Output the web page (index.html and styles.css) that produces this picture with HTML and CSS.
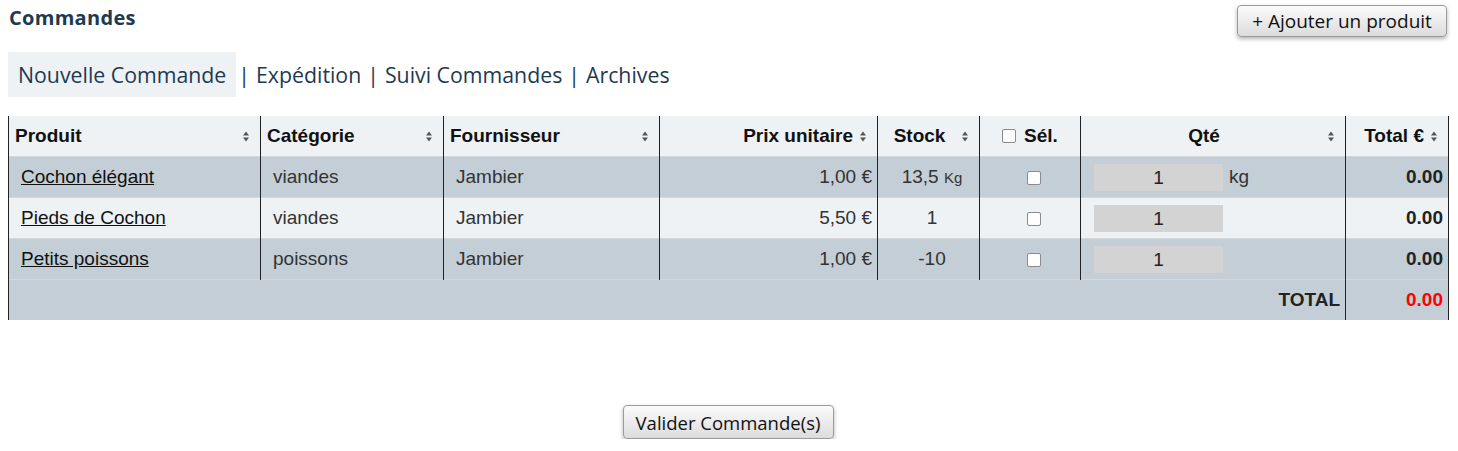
FILE: index.html
```html
<!DOCTYPE html>
<html lang="fr">
<head>
<meta charset="utf-8">
<title>Commandes</title>
<link rel="stylesheet" href="styles.css">
</head>
<body>
<div class="page">
  <div class="topbar">
    <h1 class="title">Commandes</h1>
    <button class="btn btn-add" type="button">+ Ajouter un produit</button>
  </div>

  <nav class="tabs">
    <a class="tab active" href="#">Nouvelle Commande</a>
    <span class="sep sep-first">|</span>
    <a class="tab" href="#">Expédition</a>
    <span class="sep">|</span>
    <a class="tab" href="#">Suivi Commandes</a>
    <span class="sep">|</span>
    <a class="tab" href="#">Archives</a>
  </nav>

  <table class="grid">
    <colgroup>
      <col class="w-prod">
      <col class="w-cat">
      <col class="w-four">
      <col class="w-prix">
      <col class="w-stock">
      <col class="w-sel">
      <col class="w-qte">
      <col class="w-total">
    </colgroup>
    <thead>
      <tr>
        <th class="sortable left">Produit<span class="sort"><svg viewBox="0 0 8 11" width="8" height="11"><path d="M4 0.5L7 4.4H1Z"/><path d="M1 6.6H7L4 10.5Z"/></svg></span></th>
        <th class="sortable left">Catégorie<span class="sort"><svg viewBox="0 0 8 11" width="8" height="11"><path d="M4 0.5L7 4.4H1Z"/><path d="M1 6.6H7L4 10.5Z"/></svg></span></th>
        <th class="sortable left">Fournisseur<span class="sort"><svg viewBox="0 0 8 11" width="8" height="11"><path d="M4 0.5L7 4.4H1Z"/><path d="M1 6.6H7L4 10.5Z"/></svg></span></th>
        <th class="sortable right">Prix unitaire<span class="sort"><svg viewBox="0 0 8 11" width="8" height="11"><path d="M4 0.5L7 4.4H1Z"/><path d="M1 6.6H7L4 10.5Z"/></svg></span></th>
        <th class="sortable center">Stock<span class="sort"><svg viewBox="0 0 8 11" width="8" height="11"><path d="M4 0.5L7 4.4H1Z"/><path d="M1 6.6H7L4 10.5Z"/></svg></span></th>
        <th class="center sel-head"><span class="sel-wrap"><span class="cb"></span>Sél.</span></th>
        <th class="sortable center">Qté<span class="sort"><svg viewBox="0 0 8 11" width="8" height="11"><path d="M4 0.5L7 4.4H1Z"/><path d="M1 6.6H7L4 10.5Z"/></svg></span></th>
        <th class="sortable right">Total €<span class="sort"><svg viewBox="0 0 8 11" width="8" height="11"><path d="M4 0.5L7 4.4H1Z"/><path d="M1 6.6H7L4 10.5Z"/></svg></span></th>
      </tr>
    </thead>
    <tbody>
      <tr class="odd">
        <td><a class="prod" href="#">Cochon élégant</a></td>
        <td>viandes</td>
        <td>Jambier</td>
        <td class="right">1,00 €</td>
        <td class="center">13,5 <span class="unit">Kg</span></td>
        <td class="center"><span class="cb"></span></td>
        <td><span class="qty">1</span><span class="qty-unit">kg</span></td>
        <td class="right strong">0.00</td>
      </tr>
      <tr class="even">
        <td><a class="prod" href="#">Pieds de Cochon</a></td>
        <td>viandes</td>
        <td>Jambier</td>
        <td class="right">5,50 €</td>
        <td class="center">1</td>
        <td class="center"><span class="cb"></span></td>
        <td><span class="qty">1</span></td>
        <td class="right strong">0.00</td>
      </tr>
      <tr class="odd">
        <td><a class="prod" href="#">Petits poissons</a></td>
        <td>poissons</td>
        <td>Jambier</td>
        <td class="right">1,00 €</td>
        <td class="center">-10</td>
        <td class="center"><span class="cb"></span></td>
        <td><span class="qty">1</span></td>
        <td class="right strong">0.00</td>
      </tr>
      <tr class="odd total-row">
        <td colspan="7" class="right strong">TOTAL</td>
        <td class="right strong red">0.00</td>
      </tr>
    </tbody>
  </table>

  <div class="actions">
    <button class="btn btn-validate" type="button">Valider Commande(s)</button>
  </div>
</div>
</body>
</html>
```

FILE: styles.css
```css
html, body {
  margin: 0;
  padding: 0;
  background: #ffffff;
}

.page {
  padding: 0 10px 0 8px;
  font-family: "Open Sans", "Noto Sans", sans-serif;
  color: #1d3a52;
}

.topbar {
  display: flex;
  justify-content: space-between;
  align-items: flex-start;
  padding-top: 5px;
}

.title {
  margin: 0 0 0 1px;
  font-size: 20px;
  font-weight: 700;
  line-height: 26px;
  letter-spacing: 0.3px;
  color: #1d3a52;
}

.btn {
  font-family: "Open Sans", "Noto Sans", sans-serif;
  color: #111;
  background: linear-gradient(#fbfbfb, #dcdcdc);
  border: 1px solid #9a9a9a;
  border-radius: 4px;
  box-shadow: 0 2px 4px rgba(0, 0, 0, 0.3);
  cursor: pointer;
}

.btn-add {
  height: 32px;
  width: 210px;
  padding: 0;
  font-size: 19px;
  margin-right: 1px;
}

.tabs {
  display: flex;
  align-items: center;
  margin-top: 15px;
  height: 45px;
  font-size: 21.3px;
}

.tab {
  color: #1d3a52;
  text-decoration: none;
}

.tab.active {
  background: #eef2f5;
  padding: 0 10px;
  line-height: 45px;
}

.sep {
  padding: 0 6px;
  color: #1d3a52;
}

.sep.sep-first {
  padding-left: 2px;
}

.grid {
  margin-top: 19px;
  width: 1440px;
  table-layout: fixed;
  border-collapse: collapse;
  font-family: "Liberation Sans", Arial, sans-serif;
  font-size: 19px;
  color: #333;
}

.w-prod { width: 252px; }
.w-cat { width: 183px; }
.w-four { width: 216px; }
.w-prix { width: 218px; }
.w-stock { width: 102px; }
.w-sel { width: 101px; }
.w-qte { width: 265px; }
.w-total { width: 103px; }

.grid th {
  position: relative;
  height: 40px;
  padding: 0 24px 0 6px;
  background: #eef2f5;
  color: #111;
  font-weight: 700;
  border-left: 1px solid #222;
  border-right: 1px solid #222;
  white-space: nowrap;
}

.grid th.left { text-align: left; }
.grid th.right { text-align: right; }
.grid th.center { text-align: center; }
.grid th.sel-head { padding: 0 6px; }

.sort {
  position: absolute;
  right: 10px;
  top: 50%;
  margin-top: -5px;
  width: 8px;
  height: 11px;
  line-height: 0;
}

.sort svg { fill: #555; }

.sel-wrap {
  display: inline-flex;
  align-items: center;
  gap: 8px;
}

.cb {
  display: inline-block;
  width: 12px;
  height: 12px;
  background: #fff;
  border: 1px solid #8a8a8f;
  border-radius: 2px;
  vertical-align: middle;
}

.grid td {
  height: 40px;
  padding: 0 5px 0 12px;
  border-left: 1px solid #222;
  border-right: 1px solid #222;
  border-top: 1px solid #d6d8da;
  white-space: nowrap;
}

.grid tr.odd td { background: #c3ced6; }
.grid tr.even td { background: #eef2f5; }

.grid td.right { text-align: right; }
.grid td.center { text-align: center; }
.grid td.strong { font-weight: 700; color: #222; }
.grid td.red { color: #ff0000; }

.prod {
  color: #111;
  text-decoration: underline;
}

.unit { font-size: 15px; }

.qty {
  display: inline-block;
  width: 129px;
  height: 27px;
  line-height: 27px;
  margin-left: 1px;
  background: #d3d3d3;
  text-align: center;
  color: #222;
  vertical-align: middle;
}

.qty-unit {
  margin-left: 6px;
  vertical-align: middle;
}

.actions {
  display: flex;
  justify-content: center;
  margin-top: 85px;
}

.btn-validate {
  height: 34px;
  width: 211px;
  padding: 0;
  font-size: 18.5px;
}
```
